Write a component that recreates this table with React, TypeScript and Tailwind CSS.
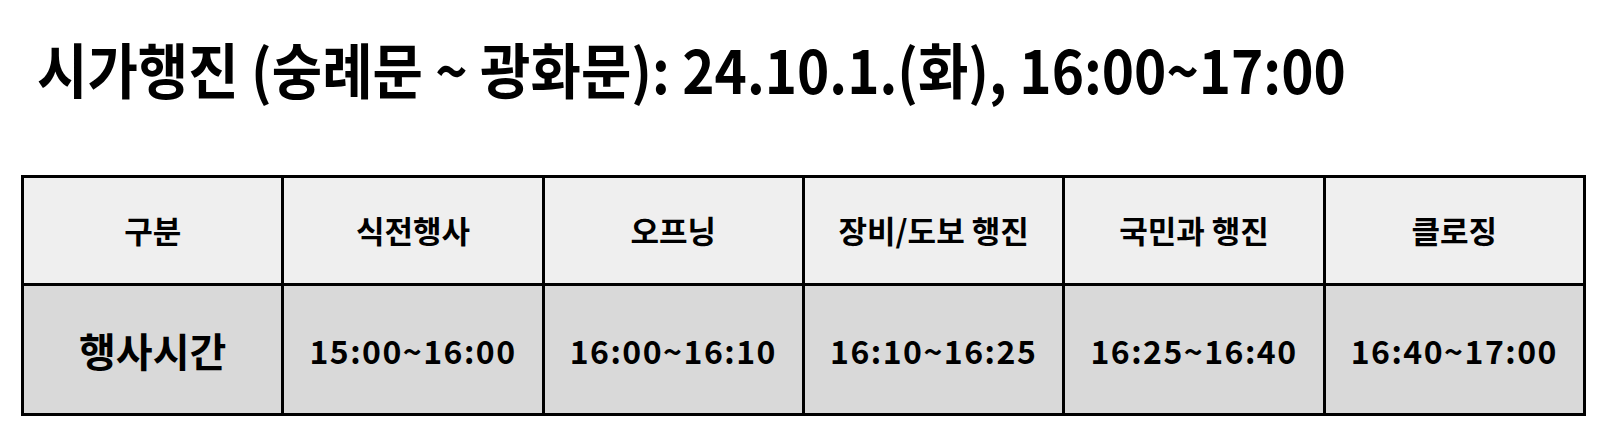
const headers = ['구분', '식전행사', '오프닝', '장비/도보 행진', '국민과 행진', '클로징'];
const times = ['15:00~16:00', '16:00~16:10', '16:10~16:25', '16:25~16:40', '16:40~17:00'];

export default function App() {
  return (
    <div className="w-[1606px] h-[442px] bg-white text-black font-['Noto_Sans_CJK_KR',sans-serif]">
      {/* Title */}
      <h1 className="pl-[37px] pt-[33px] h-[175px] text-[60px] font-bold leading-[70px] whitespace-nowrap">
        <span className="inline-block origin-left scale-x-[0.913]">
          시가행진 (숭례문 ~ 광화문): 24.10.1.(화), 16:00~17:00
        </span>
      </h1>

      {/* Schedule table */}
      <div className="ml-[21px] w-[1565px] grid grid-cols-6 border-l-[3px] border-t-[3px] border-black">
        {headers.map((h) => (
          <div
            key={h}
            className="h-[108px] flex items-center justify-center bg-[#efefef] border-r-[3px] border-b-[3px] border-black text-[31px] font-bold"
          >
            {h}
          </div>
        ))}
        <div className="h-[130px] flex items-center justify-center bg-[#d9d9d9] border-r-[3px] border-b-[3px] border-black text-[40px] font-bold">
          행사시간
        </div>
        {times.map((t) => (
          <div
            key={t}
            className="h-[130px] flex items-center justify-center bg-[#d9d9d9] border-r-[3px] border-b-[3px] border-black text-[32px] font-bold tracking-[1.5px]"
          >
            {t}
          </div>
        ))}
      </div>
    </div>
  );
}
